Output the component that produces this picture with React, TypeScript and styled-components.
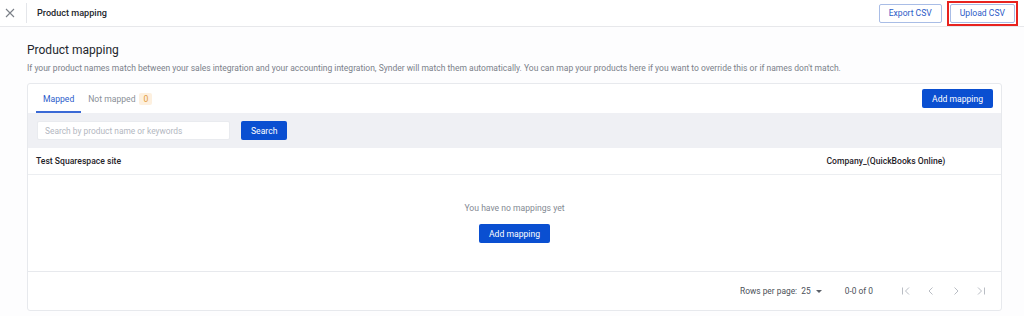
import React from 'react'
import styled, { createGlobalStyle } from 'styled-components'

const GlobalStyle = createGlobalStyle`
    * {
        box-sizing: border-box;
    }
    body {
        margin: 0;
        background: #fdfdfe;
        font-family: Roboto, 'Liberation Sans', Arial, sans-serif;
        color: #1f2329;
    }
`

const CloseIcon = () => (
    <svg width="10" height="10" viewBox="0 0 10 10" fill="none">
        <path d="M1 1l8 8M9 1L1 9" stroke="#7a7f87" strokeWidth="1.1" />
    </svg>
)

const PageIcon: React.FC<{ d: string }> = ({ d }) => (
    <svg width="10" height="10" viewBox="0 0 10 10" fill="none">
        <path d={d} stroke="#b9bdc4" strokeWidth="1" />
    </svg>
)

export default function App() {
    return (
        <>
            <GlobalStyle />
            <TopBar>
                <CloseButton>
                    <CloseIcon />
                </CloseButton>
                <Divider />
                <TopTitle>Product mapping</TopTitle>
                <TopActions>
                    <OutlineButton>Export CSV</OutlineButton>
                    <Highlight>
                        <OutlineButton>Upload CSV</OutlineButton>
                    </Highlight>
                </TopActions>
            </TopBar>
            <Main>
                <Heading>Product mapping</Heading>
                <Description>
                    If your product names match between your sales integration and your
                    accounting integration, Synder will match them automatically. You can map
                    your products here if you want to override this or if names don't match.
                </Description>
                <Card>
                    <TabsRow>
                        <Tabs>
                            <Tab $active>Mapped</Tab>
                            <Tab>
                                Not mapped <Badge>0</Badge>
                            </Tab>
                        </Tabs>
                        <PrimaryButton>Add mapping</PrimaryButton>
                    </TabsRow>
                    <SearchBar>
                        <SearchInput placeholder="Search by product name or keywords" />
                        <PrimaryButton>Search</PrimaryButton>
                    </SearchBar>
                    <HeaderRow>
                        <HeaderCell>Test Squarespace site</HeaderCell>
                        <HeaderCell $right>Company_(QuickBooks Online)</HeaderCell>
                    </HeaderRow>
                    <Empty>
                        <EmptyText>You have no mappings yet</EmptyText>
                        <PrimaryButton>Add mapping</PrimaryButton>
                    </Empty>
                    <Footer>
                        <FooterText>
                            Rows per page:&nbsp;&nbsp;25
                            <Caret />
                        </FooterText>
                        <FooterText $wide>0-0 of 0</FooterText>
                        <Pager>
                            <PageIcon d="M1.5 1.5v7M8 1.5L4.5 5 8 8.5" />
                            <PageIcon d="M6.5 1.5L3 5l3.5 3.5" />
                            <PageIcon d="M3.5 1.5L7 5 3.5 8.5" />
                            <PageIcon d="M2 1.5L5.5 5 2 8.5M8.5 1.5v7" />
                        </Pager>
                    </Footer>
                </Card>
            </Main>
        </>
    )
}

const TopBar = styled.header`
    height: 27px;
    display: flex;
    align-items: center;
    border-bottom: 1px solid #e7e8eb;
    background: #fff;
    padding-right: 6px;
`
const CloseButton = styled.div`
    width: 20px;
    display: flex;
    justify-content: center;
`
const Divider = styled.div`
    width: 1px;
    height: 20px;
    background: #e4e6ea;
    margin-left: 6px;
    margin-right: 10px;
`
const TopTitle = styled.div`
    font-size: 9.1px;
    font-weight: 500;
    color: #22262c;
`
const TopActions = styled.div`
    margin-left: auto;
    display: flex;
    gap: 5px;
    align-items: center;
`
const Highlight = styled.div`
    border: 2px solid #e8231f;
    padding: 1px;
    display: flex;
`
const OutlineButton = styled.button`
    font-family: inherit;
    font-size: 8.6px;
    color: #2c5bc7;
    background: #fff;
    border: 1px solid #a9bde6;
    border-radius: 2px;
    height: 19px;
    padding: 0 9px;
`
const Main = styled.main`
    padding: 14px 22px 0 27px;
`
const Heading = styled.h1`
    margin: 0;
    font-size: 12px;
    font-weight: 400;
    line-height: 18px;
    color: #23272d;
`
const Description = styled.p`
    margin: 3px 0 0;
    font-size: 8.5px;
    line-height: 12px;
    color: #7b818a;
`
const Card = styled.section`
    margin-top: 9px;
    background: #fff;
    border: 1px solid #e7e9ed;
    border-radius: 3px;
`
const TabsRow = styled.div`
    height: 29px;
    display: flex;
    align-items: center;
    justify-content: space-between;
    padding: 0 8px 0 8px;
`
const Tabs = styled.div`
    display: flex;
    height: 100%;
`
const Tab = styled.div<{ $active?: boolean }>`
    display: flex;
    align-items: center;
    gap: 4px;
    padding: 2px 7px 0;
    font-size: 8.6px;
    color: ${(p) => (p.$active ? '#2d5ccb' : '#8a8f97')};
    border-bottom: 2px solid ${(p) => (p.$active ? '#3b6ad6' : 'transparent')};
`
const Badge = styled.span`
    background: #fdf0df;
    color: #e39a3b;
    font-size: 8.6px;
    line-height: 12px;
    border-radius: 2px;
    padding: 0 4px;
`
const PrimaryButton = styled.button`
    font-family: inherit;
    font-size: 8.6px;
    color: #fff;
    background: #0a4fd1;
    border: none;
    border-radius: 2px;
    height: 19px;
    padding: 0 10px;
`
const SearchBar = styled.div`
    height: 35px;
    display: flex;
    align-items: center;
    gap: 11px;
    background: #eff0f4;
    padding: 0 9px;
`
const SearchInput = styled.input`
    font-family: inherit;
    font-size: 8.4px;
    width: 193px;
    height: 19px;
    border: 1px solid #e9ebef;
    border-radius: 2px;
    padding: 0 7px;
    background: #fff;
    &::placeholder {
        color: #b3b7bf;
    }
`
const HeaderRow = styled.div`
    height: 27px;
    display: grid;
    grid-template-columns: 1fr 1fr;
    align-items: center;
    border-bottom: 1px solid #eceef1;
    padding: 0 8px;
`
const HeaderCell = styled.div<{ $right?: boolean }>`
    font-size: 8.6px;
    font-weight: 500;
    color: #1f2329;
    padding-left: ${(p) => (p.$right ? '312px' : '0')};
`
const Empty = styled.div`
    height: 97px;
    display: flex;
    flex-direction: column;
    align-items: center;
    justify-content: center;
    gap: 11px;
    border-bottom: 1px solid #e7e9ed;
`
const EmptyText = styled.div`
    font-size: 8.6px;
    color: #848a93;
`
const Footer = styled.div`
    height: 38px;
    display: flex;
    align-items: center;
    justify-content: flex-end;
    padding-right: 15px;
`
const FooterText = styled.div<{ $wide?: boolean }>`
    font-size: 8.4px;
    color: #4c5159;
    display: flex;
    align-items: center;
    margin-right: ${(p) => (p.$wide ? '28px' : '23px')};
`
const Caret = styled.span`
    width: 0;
    height: 0;
    margin-left: 5px;
    border-left: 3px solid transparent;
    border-right: 3px solid transparent;
    border-top: 3px solid #5b6068;
`
const Pager = styled.div`
    display: flex;
    gap: 15px;
`
